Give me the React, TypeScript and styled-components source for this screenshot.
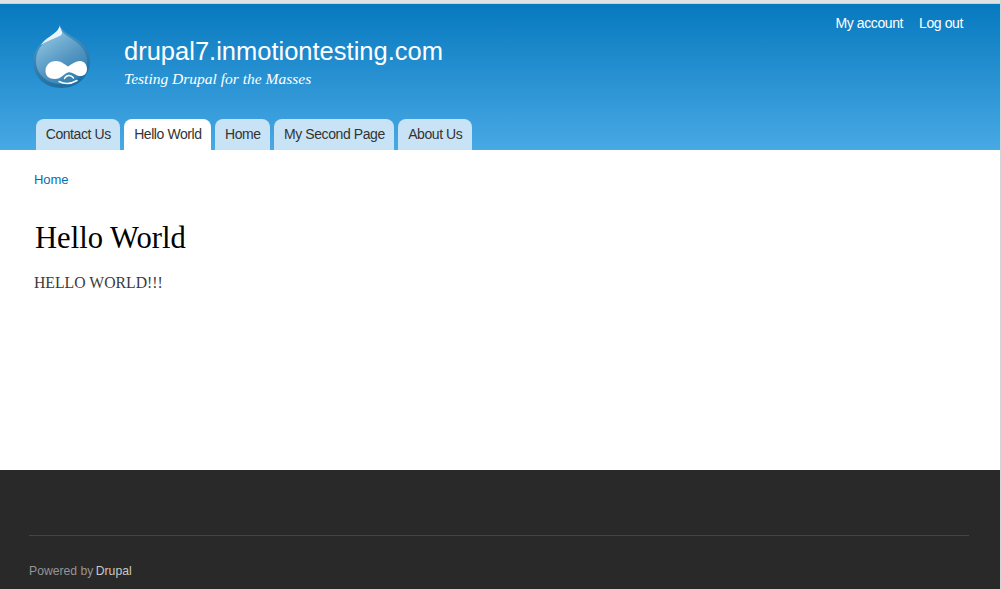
import React from "react";
import styled, { createGlobalStyle } from "styled-components";

const Global = createGlobalStyle`
  html, body { margin: 0; padding: 0; background: #fff; overflow: hidden; }
  body { font-family: "Liberation Sans", Arial, sans-serif; }
  * { box-sizing: border-box; }
`;

const Page = styled.div`
  width: 1001px;
  height: 589px;
  border-right: 1px solid #d4d4d4;
  display: flex;
  flex-direction: column;
  overflow: hidden;
`;

const TopStrip = styled.div`
  flex: none;
  height: 4px;
  background: #e2e2e2;
  border-bottom: 1px solid #c9d3da;
`;

const Header = styled.header`
  flex: none;
  height: 146px;
  background: linear-gradient(to bottom, #0779bf 0%, #48a9e4 100%);
  display: flex;
  flex-direction: column;
`;

const TopRow = styled.div`
  display: flex;
  justify-content: space-between;
  height: 115px;
`;

const Brand = styled.div`
  display: flex;
  align-items: flex-start;
  padding: 20px 0 0 33px;
  gap: 31px;
`;

const BrandText = styled.div`
  padding-top: 11px;
`;

const SiteName = styled.div`
  font-size: 25.5px;
  line-height: 32px;
  color: #fff;
`;

const Slogan = styled.div`
  font-family: "Liberation Serif", serif;
  font-style: italic;
  font-size: 15.5px;
  line-height: 20px;
  margin-top: 2px;
  color: #fff;
`;

const SecondaryMenu = styled.nav`
  display: flex;
  gap: 16px;
  padding: 10px 37px 0 0;
`;

const SecondaryLink = styled.a`
  font-size: 14px;
  line-height: 18px;
  color: #fff;
  letter-spacing: -0.4px;
`;

const Tabs = styled.nav`
  display: flex;
  gap: 4px;
  padding-left: 36px;
`;

const Tab = styled.a<{ $active?: boolean }>`
  height: 31px;
  padding: 0 9.7px;
  line-height: 31px;
  font-size: 14px;
  letter-spacing: -0.42px;
  color: #333;
  background: ${(p) => (p.$active ? "#fff" : "#c9e3f6")};
  border-radius: 8px 8px 0 0;
`;

const Main = styled.main`
  flex: 1;
  background: #fff;
  padding: 22px 34px 0;
`;

const Breadcrumb = styled.a`
  display: block;
  font-size: 13px;
  line-height: 16px;
  color: #0071b3;
  letter-spacing: -0.1px;
`;

const Title = styled.h1`
  margin: 32px 0 0 1px;
  font-family: "Liberation Serif", serif;
  font-weight: 400;
  font-size: 30.6px;
  line-height: 36px;
  color: #000;
`;

const Body = styled.p`
  margin: 17px 0 0;
  font-family: "Liberation Serif", serif;
  font-size: 15.75px;
  line-height: 20px;
  color: #3b3b3b;
`;

const Footer = styled.footer`
  flex: none;
  height: 119px;
  background: #292929;
  padding: 65px 31px 0 29px;
`;

const FooterRule = styled.div`
  height: 1px;
  background: #444;
`;

const Powered = styled.div`
  margin-top: 27px;
  font-size: 12.2px;
  line-height: 16px;
  color: #959595;
`;

const PoweredLink = styled.a`
  color: #c8c8c8;
  margin-left: -1px;
`;

const Logo = () => (
  <svg width="60" height="66" viewBox="0 0 60 66" aria-hidden="true" style={{ flex: "none" }}>
    <defs>
      <linearGradient id="drop" x1="0.2" y1="0.1" x2="0.75" y2="1">
        <stop offset="0%" stopColor="#8fc3e0" />
        <stop offset="55%" stopColor="#5597c2" />
        <stop offset="100%" stopColor="#2f7dae" />
      </linearGradient>
      <linearGradient id="rim" x1="0.3" y1="0" x2="0.6" y2="1">
        <stop offset="0%" stopColor="#4f9ccb" />
        <stop offset="100%" stopColor="#1d6ca0" />
      </linearGradient>
    </defs>
    <path
      d="M26.500 0C27 6 21 10 15 14 7 19 0 27 0 38c0 15 12 26 28.500 26C44 64 57 53 57 37 57 24 47 17 40 13 34 9.500 28 6 26.500 0Z"
      fill="url(#rim)"
    />
    <path
      d="M26.500 3C27 8 21 12 16 15.500 8 20 3 27 3 37c0 13 11 23 25 23C42 60 54 50 54 37 54 26 45 19 39 15 33 11.500 28 8 26.500 3Z"
      fill="url(#drop)"
    />
    <path
      d="M26.500 2C26 7 19 11 14 14.500 11 17 9 19 8 21 12 18 16 16.500 21 14.500 26 12.500 30 11 29 8 28.500 6 27.500 4 26.500 2Z"
      fill="#e8f4fb"
    />
    <path
      d="M12.500 47C12.500 41 17 37 23 37 28 37 31 40 35 42.500 39 40 43 37 47 37 51.500 37 54 41 54 45 54 50 50.500 52.500 46.500 52 42 51.500 39 47.500 35 48.500 31 49.500 28 55 22 55 16 55 12.500 52 12.500 47Z"
      fill="#fff"
    />
    <path d="M26 57.500C31 60 38 60 44 56.500" fill="none" stroke="#fff" strokeWidth="1.500" strokeLinecap="round" />
    <path d="M31.500 54.500C33.500 50.500 38 50.500 40.500 54" fill="none" stroke="#fff" strokeWidth="1.400" strokeLinecap="round" />
  </svg>
);

const tabs = ["Contact Us", "Hello World", "Home", "My Second Page", "About Us"];

export default function App() {
  return (
    <Page>
      <Global />
      <TopStrip />
      <Header>
        <TopRow>
          <Brand>
            <Logo />
            <BrandText>
              <SiteName>drupal7.inmotiontesting.com</SiteName>
              <Slogan>Testing Drupal for the Masses</Slogan>
            </BrandText>
          </Brand>
          <SecondaryMenu>
            <SecondaryLink>My account</SecondaryLink>
            <SecondaryLink>Log out</SecondaryLink>
          </SecondaryMenu>
        </TopRow>
        <Tabs>
          {tabs.map((t) => (
            <Tab key={t} $active={t === "Hello World"}>
              {t}
            </Tab>
          ))}
        </Tabs>
      </Header>
      <Main>
        <Breadcrumb>Home</Breadcrumb>
        <Title>Hello World</Title>
        <Body>HELLO WORLD!!!</Body>
      </Main>
      <Footer>
        <FooterRule />
        <Powered>
          Powered by <PoweredLink>Drupal</PoweredLink>
        </Powered>
      </Footer>
    </Page>
  );
}
